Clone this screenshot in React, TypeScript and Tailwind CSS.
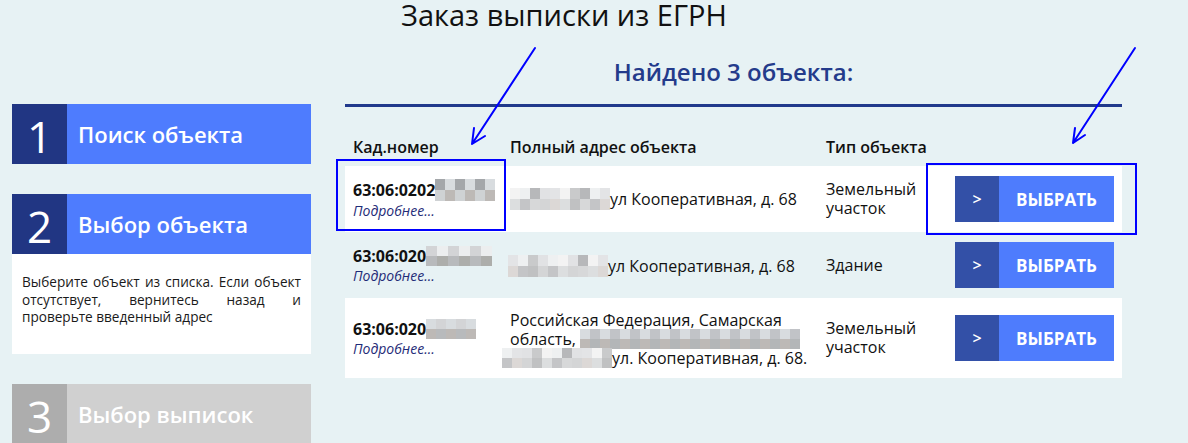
import React from "react";

const PALETTE = [
  "bg-[#c9cbcd]",
  "bg-[#adaeab]",
  "bg-[#d3d4d6]",
  "bg-[#bdb9b6]",
  "bg-[#a4a7aa]",
  "bg-[#e4e5e7]",
  "bg-[#c1c3c7]",
  "bg-[#b8babc]",
  "bg-[#dcdee0]",
  "bg-[#cfd2d4]",
  "bg-[#eceeef]",
  "bg-[#b3b6b8]",
  "bg-[#d8dcdf]",
  "bg-[#e9eaeb]",
];

const LIGHT = [
  "bg-[#e3e4e6]",
  "bg-[#dcdedf]",
  "bg-[#c9cacb]",
  "bg-[#d7d8d9]",
  "bg-[#eef0f1]",
  "bg-[#dcd8d6]",
  "bg-[#e1e2e4]",
  "bg-[#c0c1c2]",
  "bg-[#f3f3f3]",
  "bg-[#c4c5c7]",
  "bg-[#b7b8ba]",
  "bg-[#d4d5d6]",
];

function Mosaic({
  cols,
  rows,
  cell,
  seed,
  light,
}: {
  cols: number;
  rows: number;
  cell: string;
  seed: number;
  light?: boolean;
}) {
  const pal = light ? LIGHT : PALETTE;
  return (
    <div className="flex flex-col shrink-0">
      {Array.from({ length: rows }).map((_, r) => (
        <div key={r} className="flex">
          {Array.from({ length: cols }).map((_, c) => {
            const idx = (r * 5 + c * 7 + seed * 3 + ((c * c + seed) % 4)) % pal.length;
            return <div key={c} className={`${cell} ${pal[idx]}`} />;
          })}
        </div>
      ))}
    </div>
  );
}

function Step({
  n,
  label,
  active,
  children,
}: {
  n: string;
  label: string;
  active: boolean;
  children?: React.ReactNode;
}) {
  return (
    <div>
      <div className="flex h-[60px]">
        <div
          className={`w-[55px] flex items-center justify-center pt-[3px] text-[44px] leading-none text-white ${
            active ? "bg-[#213683]" : "bg-[#adadad]"
          }`}
        >
          {n}
        </div>
        <div
          className={`flex-1 flex items-center pl-[11px] text-[22px] font-semibold text-white ${
            active ? "bg-[#4e7cfe]" : "bg-[#d0d0d0]"
          }`}
        >
          {label}
        </div>
      </div>
      {children}
    </div>
  );
}

function SelectButton() {
  return (
    <div className="flex h-[46px] w-[159px]">
      <div className="w-[44px] bg-[#3350a7] flex items-center justify-center text-white font-semibold text-[16px]">
        &gt;
      </div>
      <div className="flex-1 bg-[#4e7cfd] flex items-center justify-center text-white font-bold text-[17px]">
        ВЫБРАТЬ
      </div>
    </div>
  );
}

function CadCell({
  num,
  cols,
  cell,
  seed,
}: {
  num: string;
  cols: number;
  cell: string;
  seed: number;
}) {
  return (
    <div className="pl-[8px] flex flex-col">
      <div className="flex items-center">
        <span className="text-[16px] font-bold leading-[20px] text-[#111]">{num}</span>
        <Mosaic cols={cols} rows={2} cell={cell} seed={seed} />
      </div>
      <div className="text-[14px] italic leading-[19px] text-[#1f2c78]">Подробнее...</div>
    </div>
  );
}

export default function App() {
  return (
    <div className="relative w-[1188px] h-[443px] overflow-hidden bg-[#e7f2f4] font-['Open_Sans',sans-serif] text-[#111]">
      <h1 className="pl-[401px] text-[29px] leading-[30px] font-medium text-[#111]">Заказ выписки из ЕГРН</h1>

      <div className="flex">
        {/* Sidebar */}
        <div className="ml-[12px] w-[299px] pt-[74px] flex flex-col gap-[30px]">
          <Step n="1" label="Поиск объекта" active />
          <Step n="2" label="Выбор объекта" active>
            <div className="bg-white h-[100px] px-[10px] pt-[19px] text-[13.6px] leading-[17.5px] text-[#1a1a1a] text-justify">
              Выберите объект из списка. Если объект отсутствует, вернитесь назад и проверьте введенный адрес
            </div>
          </Step>
          <Step n="3" label="Выбор выписок" active={false} />
        </div>

        {/* Main */}
        <div className="ml-[34px] w-[777px] flex flex-col">
          <div className="mt-[26px] text-center text-[24px] leading-[32px] font-semibold text-[#243b8b]">
            Найдено 3 объекта:
          </div>
          <div className="mt-[16px] h-[3px] bg-[#213a8c]" />

          <div className="grid grid-cols-[157px_316px_129px_175px] pt-[30px] pb-[9px] text-[16px] leading-[20px] font-semibold text-[#111]">
            <div className="pl-[8px]">Кад.номер</div>
            <div className="pl-[8px]">Полный адрес объекта</div>
            <div className="pl-[8px]">Тип объекта</div>
            <div />
          </div>

          {/* Row 1 */}
          <div className="grid grid-cols-[157px_316px_129px_175px] items-center h-[66px] bg-white text-[16px] leading-[19px]">
            <CadCell num="63:06:0202" cols={6} cell="w-[10px] h-[11px]" seed={1} />
            <div className="pl-[8px] flex items-center">
              <Mosaic cols={10} rows={2} cell="w-[10px] h-[11px]" seed={2} light />
              <span>ул Кооперативная, д. 68</span>
            </div>
            <div className="pl-[8px]">Земельный участок</div>
            <div className="pl-[8px]">
              <SelectButton />
            </div>
          </div>

          {/* Row 2 */}
          <div className="grid grid-cols-[157px_316px_129px_175px] items-center h-[66px] text-[16px] leading-[19px]">
            <CadCell num="63:06:020" cols={6} cell="w-[11px] h-[10px]" seed={5} />
            <div className="pl-[6px] flex items-center pt-[2px]">
              <Mosaic cols={10} rows={2} cell="w-[10px] h-[11px]" seed={7} light />
              <span>ул Кооперативная, д. 68</span>
            </div>
            <div className="pl-[8px]">Здание</div>
            <div className="pl-[8px]">
              <SelectButton />
            </div>
          </div>

          {/* Row 3 */}
          <div className="grid grid-cols-[157px_316px_129px_175px] items-center h-[80px] bg-white text-[16px] leading-[19px]">
            <CadCell num="63:06:020" cols={5} cell="w-[10px] h-[10px]" seed={3} />
            <div className="pl-[8px] flex flex-col pt-[2px]">
              <div>Российская Федерация, Самарская</div>
              <div className="flex items-center h-[19px]">
                <span>область,&nbsp;</span>
                <Mosaic cols={22} rows={2} cell="w-[10px] h-[10px]" seed={4} />
              </div>
              <div className="flex items-center h-[19px] -ml-[8px]">
                <Mosaic cols={11} rows={2} cell="w-[10px] h-[10px]" seed={9} light />
                <span>ул. Кооперативная, д. 68.</span>
              </div>
            </div>
            <div className="pl-[8px]">Земельный участок</div>
            <div className="pl-[8px]">
              <SelectButton />
            </div>
          </div>
        </div>
      </div>

      {/* Annotation overlays */}
      <div className="absolute left-[336px] top-[159px] w-[170px] h-[72px] border-2 border-[#0000ff] pointer-events-none" />
      <div className="absolute left-[926px] top-[163px] w-[211px] h-[72px] border-2 border-[#0000ff] pointer-events-none" />
      <svg
        className="absolute left-0 top-0 pointer-events-none"
        width="1188"
        height="443"
        viewBox="0 0 1188 443"
        fill="none"
        stroke="#0000ff"
        strokeWidth="2"
        strokeLinecap="round"
      >
        <path d="M535 48 L472 144 M472 144 L474 128 M472 144 L485 136" />
        <path d="M1135 48 L1073 143 M1073 143 L1075 128 M1073 143 L1085 135" />
      </svg>
    </div>
  );
}
